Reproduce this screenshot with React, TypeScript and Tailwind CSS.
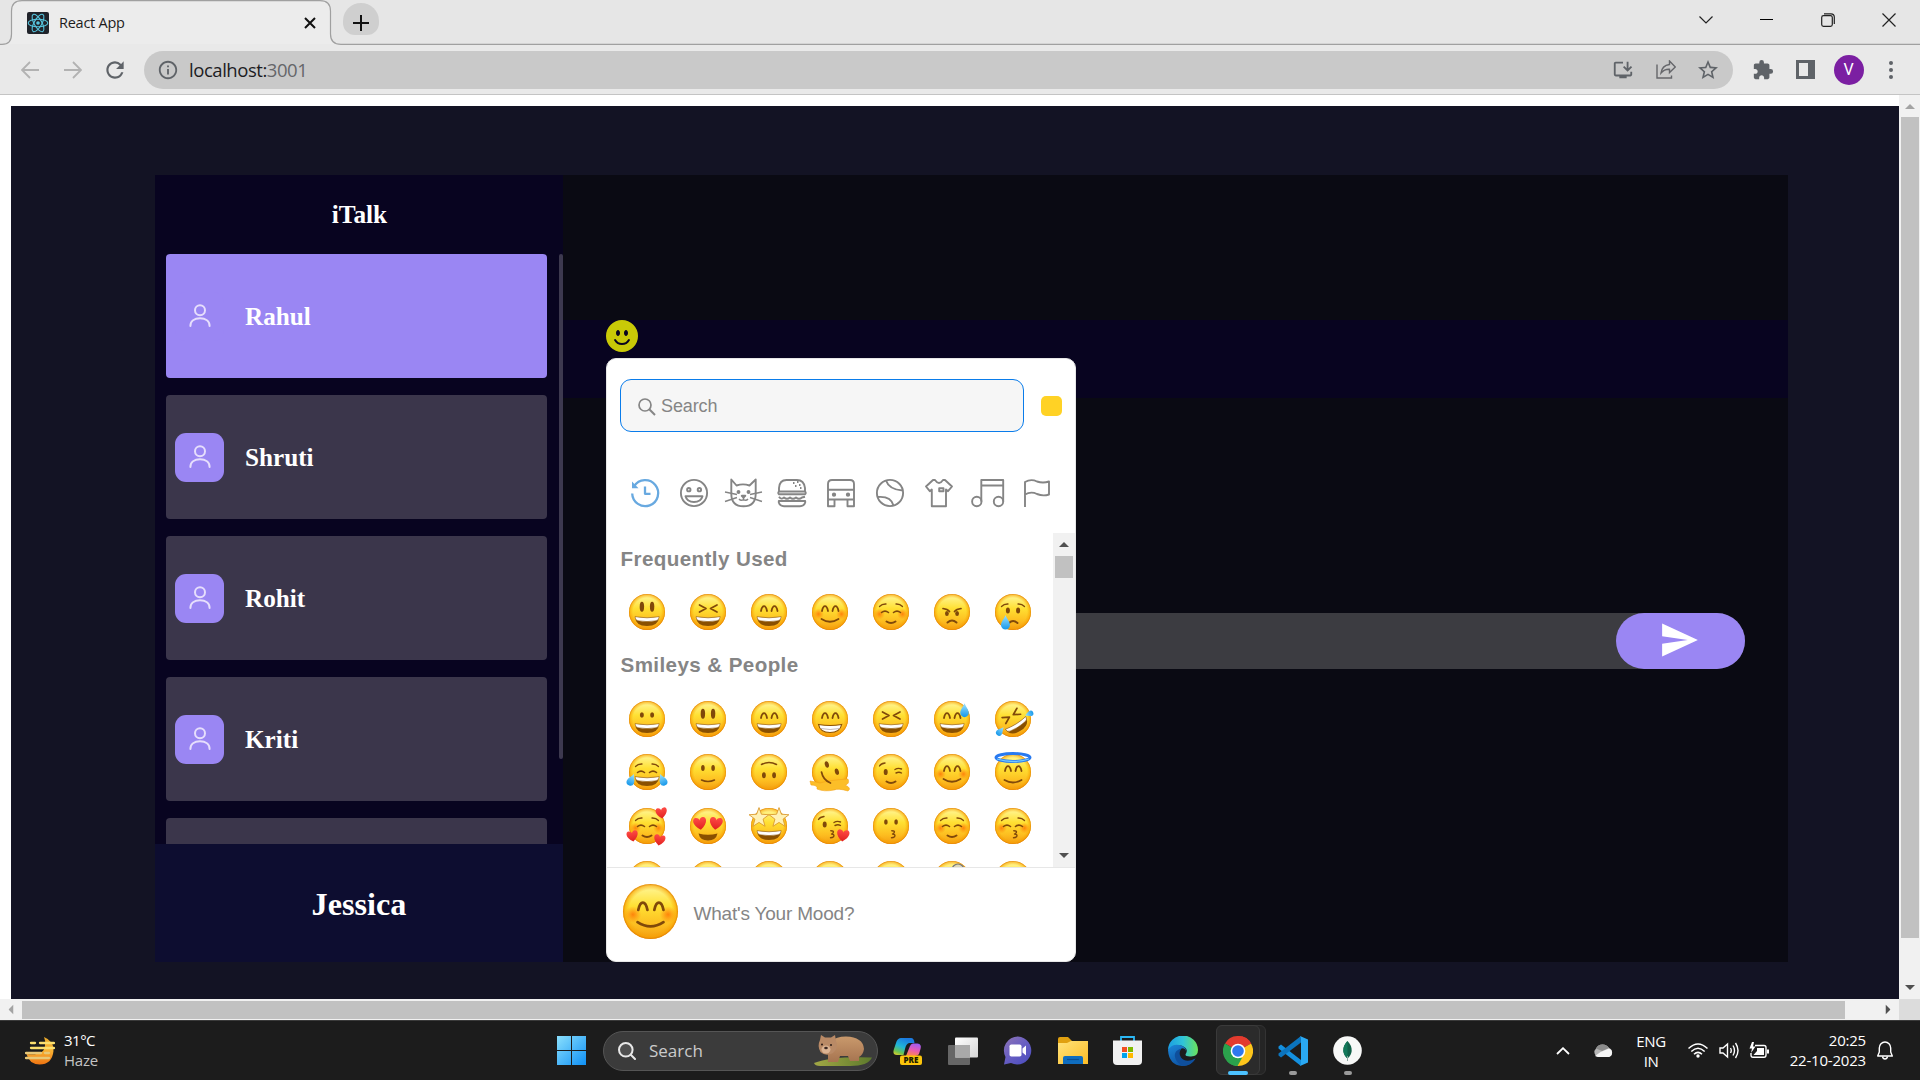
import React from "react";
import { MdExtension, MdStarBorder, MdRefresh, MdInstallDesktop, MdInfoOutline } from "react-icons/md";
import { BsEmojiSmileFill } from "react-icons/bs";
import { IoMdSend } from "react-icons/io";

const BROWN = "#80490a";

/* ---------- emoji ---------- */

const SharedDefs = () => (
  <svg className="absolute h-0 w-0" aria-hidden="true">
    <defs>
      <linearGradient id="face" x1="0" y1="0" x2="0" y2="1">
        <stop offset="0" stopColor="#fff8a0" />
        <stop offset="0.4" stopColor="#ffe033" />
        <stop offset="0.75" stopColor="#fdbd20" />
        <stop offset="1" stopColor="#f39c12" />
      </linearGradient>
      <radialGradient id="rim">
        <stop offset="0.78" stopColor="#f7a400" stopOpacity="0" />
        <stop offset="0.93" stopColor="#f79f00" stopOpacity="0.55" />
        <stop offset="1" stopColor="#e07b00" stopOpacity="0.95" />
      </radialGradient>
      <radialGradient id="blush">
        <stop offset="0" stopColor="#ff6a00" stopOpacity="0.75" />
        <stop offset="1" stopColor="#ff7a00" stopOpacity="0" />
      </radialGradient>
      <linearGradient id="tear" x1="0" y1="0" x2="0" y2="1">
        <stop offset="0" stopColor="#9ee3ff" />
        <stop offset="1" stopColor="#1597ea" />
      </linearGradient>
      <linearGradient id="heart" x1="0" y1="0" x2="0" y2="1">
        <stop offset="0" stopColor="#ff4b46" />
        <stop offset="1" stopColor="#e0201f" />
      </linearGradient>
    </defs>
  </svg>
);

const Stroke = ({ d, w = 1.7 }: { d: string; w?: number }) => (
  <path d={d} fill="none" stroke={BROWN} strokeWidth={w} strokeLinecap="round" strokeLinejoin="round" />
);
const Eyes = ({ rx = 1.8, ry = 2.7, y = 14 }: { rx?: number; ry?: number; y?: number }) => (
  <g fill={BROWN}>
    <ellipse cx="12.9" cy={y} rx={rx} ry={ry} />
    <ellipse cx="23.1" cy={y} rx={rx} ry={ry} />
  </g>
);
const Happy = () => <Stroke d="M10 17 Q11 12.2 13 12.2 Q15 12.2 16 17 M20.500 17 Q21.500 12.2 23.500 12.2 Q25.500 12.2 26.500 17" w={1.8} />;
const Calm = () => <Stroke d="M8.500 18.500 Q12 15.600 15.500 18.500 M20.500 18.500 Q24 15.600 27.500 18.500" w={1.6} />;
const Brows = () => <Stroke d="M6.500 12.500 Q9 9.800 13 10 M23 10 Q27 9.800 29.500 12.500" w={1.3} />;
const Squint = () => <Stroke d="M9.500 11 L16 14.500 L9.500 18 M27 11 L20.500 14.500 L27 18" w={1.7} />;
const Grin = () => (
  <g>
    <path d="M6 22.700 Q18 25 30.200 22.700 Q29.500 32 18 32 Q6.500 32 6 22.700Z" fill="#8a5000" />
    <path d="M6 22.700 Q18 25 30.200 22.700 Q30 26.200 27 26.700 Q18 28.500 9 26.700 Q6.200 26.200 6 22.700Z" fill="#fff" stroke="#8a5000" strokeWidth="0.5" />
  </g>
);
const Teeth = () => (
  <g>
    <path d="M6.500 23.500 Q18 25.500 29.700 23.500 Q28 31.500 18 31.500 Q8 31.500 6.500 23.500Z" fill="#fff" stroke="#8a5000" strokeWidth="1.100" />
    <path d="M8.500 27.500 Q18 29.500 28 27.500" stroke="#a99" strokeWidth="0.700" fill="none" />
  </g>
);
const Blush = () => (
  <g>
    <circle cx="6.500" cy="20" r="5.500" fill="url(#blush)" />
    <circle cx="29.500" cy="20" r="5.500" fill="url(#blush)" />
  </g>
);
const Heart = ({ x, y, s = 1, r = 0 }: { x: number; y: number; s?: number; r?: number }) => (
  <path
    d="M0 5.500 C-8 0 -6 -5.500 -3 -5.200 C-1 -5 0 -3.500 0 -2.700 C0 -3.500 1 -5 3 -5.200 C6 -5.500 8 0 0 5.500Z"
    fill="url(#heart)"
    transform={`translate(${x} ${y}) rotate(${r}) scale(${s})`}
  />
);
const Drop = ({ x, y, r = 0, s = 1 }: { x: number; y: number; r?: number; s?: number }) => (
  <path
    d="M0 -7 C1 -4 4.500 0 4.500 3 A4.500 4.500 0 0 1 -4.500 3 C-4.500 0 -1 -4 0 -7Z"
    fill="url(#tear)"
    transform={`translate(${x} ${y}) rotate(${r}) scale(${s})`}
  />
);
const Kiss = () => <Stroke d="M18.800 22.800 Q22.500 22.800 21 25 Q20.500 26 19.500 26 Q23 26.300 21.500 28.800 Q20.500 29.800 18.500 29.800" w={1.4} />;
const Star = ({ x }: { x: number }) => (
  <path
    d="M0 -9 L2.200 -3 L9 -2.500 L3.700 1.500 L5.500 8 L0 4.500 L-5.500 8 L-3.700 1.500 L-9 -2.500 L-2.200 -3Z"
    fill="#fff1b5"
    stroke="#d9992c"
    strokeWidth="0.800"
    transform={`translate(${x} 9.500) scale(1.100)`}
  />
);

const features: Record<string, React.ReactNode> = {
  smiley: <><Eyes rx={2.2} ry={5} y={12.7} /><Grin /></>,
  laughing: <><Squint /><Grin /></>,
  smile: <><Happy /><Grin /></>,
  blush: <><Blush /><Happy /><Stroke d="M9.500 25 Q18 30.500 26.500 25" w={1.800} /></>,
  relaxed: <><Blush /><Brows /><Calm /><Stroke d="M13.500 27.500 Q18 30.500 22.500 27.500" w={2} /></>,
  angry: <><Stroke d="M9 14.500 Q13.500 15 15.500 17.500 M27 14.500 Q22.500 15 20.500 17.500" w={1.700} /><Eyes rx={1.9} ry={2.6} y={19.5} /><Stroke d="M13.500 28.500 Q18 24.500 22.500 28.500" w={2} /></>,
  cry: <><Brows /><Eyes rx={2} ry={3} y={16.5} /><Stroke d="M14 29 Q18 25 22.500 29" w={1.900} /><Drop x={10.500} y={28} /></>,
  grinning: <><Eyes rx={2} ry={2.700} /><Grin /></>,
  beaming: <><Happy /><Teeth /></>,
  sweat: <><Happy /><Grin /><Drop x={30.500} y={9} s={0.950} /></>,
  rofl: <><g transform="rotate(-32 18 18)"><Squint /><Grin /></g><Drop x={34} y={13} r={-110} s={0.600} /><Drop x={5.500} y={30} r={40} s={0.700} /></>,
  joy: <><Brows /><Calm /><Grin /><Drop x={2.500} y={25.500} r={25} s={0.850} /><Drop x={33.500} y={25.500} r={-25} s={0.850} /></>,
  slight: <><Eyes rx={1.8} ry={3} /><Stroke d="M11.500 26 Q18 29 24.500 26" w={1.500} /></>,
  upside: <g transform="rotate(180 18 18)"><Eyes rx={1.9} ry={3} y={14.800} /><Stroke d="M10.500 25.500 Q18 29.500 25.500 25.500" w={1.500} /></g>,
  melt: <><ellipse cx="14.700" cy="10.500" rx="2" ry="3.300" fill={BROWN} transform="rotate(-15 15 10)" /><ellipse cx="24.700" cy="17.600" rx="2" ry="3.300" fill={BROWN} transform="rotate(-15 25 17)" /><path d="M-2 27 Q4 28 8 29 Q18 26 36 25 Q38 30 33 31 Q40 34 36 37 Q26 34 22 36 Q12 38 5 35 Q6 31 -1 31Z" fill="#fcbe28" stroke="#f4a41a" strokeWidth="0.600" /><Stroke d="M9.500 18 Q11 26 18.500 29" /></>,
  wink: <><Stroke d="M6.500 12 Q8 9.500 12 9 M22 15.500 Q25 13.500 28.500 15 M23 19 Q26 17.500 28.500 19" w={1.400} /><ellipse cx="12.700" cy="18" rx="2" ry="3.100" fill={BROWN} /><Stroke d="M13.500 27.500 Q18 30.500 22.500 27.500" w={2} /></>,
  halo: <><Happy /><Stroke d="M9.500 26 Q18 31 26.500 26" w={1.800} /><ellipse cx="18" cy="3.500" rx="17" ry="4" fill="none" stroke="#287af0" strokeWidth="3" /><path d="M2 5 Q18 10 34 5" fill="none" stroke="#72c8ff" strokeWidth="1.300" /></>,
  hearts: <><Blush /><Brows /><Calm /><Stroke d="M13.500 27.500 Q18 30.500 22.500 27.500" w={2} /><Heart x={32.500} y={5} r={-8} /><Heart x={3.500} y={28} r={-10} /><Heart x={30.500} y={32} r={10} /></>,
  hearteyes: <><Heart x={10} y={15.500} s={1.150} r={-8} /><Heart x={26} y={15.500} s={1.150} r={8} /><path d="M8.500 25.500 Q18 28 27.500 25.500 Q26 32.500 18 32.500 Q10 32.500 8.500 25.500Z" fill="#8a5000" /></>,
  star: <><Star x={8} /><Star x={28} /><Grin /></>,
  kissheart: <><Stroke d="M6.500 11.500 Q8 9 12 8.500 M22 14.500 Q25 12.500 28.500 14 M23 17.500 Q26 16 28.500 17.500" w={1.400} /><ellipse cx="12.700" cy="16.500" rx="2" ry="3" fill={BROWN} /><Kiss /><Heart x={31} y={27.500} s={1.100} r={8} /></>,
  kissing: <><Eyes rx={1.8} ry={2.7} /><Kiss /></>,
  kissclosed: <><Blush /><Brows /><Calm /><Kiss /></>,
  plain: null,
  monocle: <circle cx="24" cy="9" r="6" fill="#ddd8b8" stroke="#777" strokeWidth="1.200" />,
};

const Emoji = ({ kind, big }: { kind: string; big?: boolean }) => (
  <svg viewBox="0 0 36 36" className={big ? "size-[55px] overflow-visible" : "size-9 overflow-visible"}>
    <circle cx="18" cy="18" r="18" fill="url(#face)" />
    <circle cx="18" cy="18" r="18" fill="url(#rim)" />
    {features[kind]}
  </svg>
);

const frequent = ["smiley", "laughing", "smile", "blush", "relaxed", "angry", "cry"];
const people = [
  "grinning", "smiley", "smile", "beaming", "laughing", "sweat", "rofl",
  "joy", "slight", "upside", "melt", "wink", "blush", "halo",
  "hearts", "hearteyes", "star", "kissheart", "kissing", "relaxed", "kissclosed",
  "plain", "plain", "plain", "plain", "plain", "monocle", "plain",
];

const EmojiGrid = ({ items }: { items: string[] }) => (
  <div className="grid auto-rows-[53.5px] grid-cols-[repeat(7,61px)]">
    {items.map((k, i) => (
      <div key={i} className="flex items-center justify-center"><Emoji kind={k} /></div>
    ))}
  </div>
);

/* ---------- picker category icons ---------- */

const categories: React.ReactNode[] = [
  <g stroke="#68a9e0" strokeWidth="2.300">
    <path d="M3.200 7.200 A13 13 0 1 1 1.200 14.500" />
    <path d="M1 2.500 V9.300 H7.500 Z" fill="#68a9e0" stroke="none" />
    <path d="M14 7.500 V14.800 H19.500" />
  </g>,
  <g>
    <circle cx="14" cy="14" r="13.100" />
    <circle cx="8.800" cy="10.700" r="1.700" /><circle cx="19.400" cy="10.700" r="1.700" />
    <path d="M5.500 17.200 H22.500 Q21 23 14 23 Q7 23 5.500 17.200Z" />
  </g>,
  <g>
    <path d="M2.300 15 V0.500 L7.500 6.500 Q14 4.200 20.500 6.500 L26.700 0.500 V15 Q26.500 27.300 14.500 27.300 Q2.500 27.300 2.300 15Z" />
    <path d="M-4 13 L8 15.500 M-4 22.500 L8 18.500 M33 13 L21 15.500 M33 22.500 L21 18.500 M14.500 18 V20.500 M10 20 Q12 22.300 14.500 20.500 Q17 22.300 19 20" strokeWidth="1.500" />
    <circle cx="9.500" cy="13" r="1" fill="#858585" /><circle cx="19.500" cy="13" r="1" fill="#858585" /><path d="M12.700 16.800 H16.300 L14.500 18.500Z" fill="#858585" />
  </g>,
  <g>
    <path d="M1 12.500 V9 Q1.500 1 8.500 1 H19 Q26 1 27 9 V12.500 M1 12.500 H27 Q28.500 14 27 15.300 H1 Q-0.500 14 1 12.500Z" />
    <path d="M1 17.800 Q3 21 6 18.500 Q9 21 12 18.500 Q15 21 18 18.500 Q21 21 24 18.500 L27 17.800 M0.800 22 H27.200 V23.500 Q26 27.200 22 27.200 H6 Q2 27.200 0.800 23.500Z" />
    <path d="M15 4 h1.500 M19 3 h1.500 M17 7 h1.500 M21 6 h1.500 M22 9 h1.500" />
  </g>,
  <g>
    <path d="M1 20.500 V5 Q1 1 5 1 H23 Q27 1 27 5 V20.500Z M1 10.800 H27 M1 20.500 V27.200 H7.500 V20.500 M20.500 20.500 V27.200 H27 V20.500" />
    <circle cx="7" cy="15.700" r="1.200" fill="#858585" /><circle cx="21" cy="15.700" r="1.200" fill="#858585" />
  </g>,
  <g>
    <circle cx="14" cy="14" r="13.100" />
    <path d="M10 1.500 Q13 10.500 26.500 11.500 M2 18 Q15 17 17.500 26.500" />
  </g>,
  <g>
    <path d="M8 1 L1 7.500 L4.800 12.200 L6.800 10.500 V27.200 H21 V10.500 L23 12.200 L27 7.500 L20 1 H18 Q14 7 10 1Z" />
    <path d="M14.200 9.200 h4.300 v3 h-4.300z" />
  </g>,
  <g>
    <circle cx="2.800" cy="22.500" r="4.700" /><circle cx="24.500" cy="22.500" r="4.700" />
    <path d="M7.300 22.500 V1 H29.200 V22.500 M7.300 6.500 H29.200" />
  </g>,
  <g>
    <path d="M2 28 V3 Q8 -0.500 14 2.500 Q20 4.500 26 2.500 V15.500 Q20 17.500 14 15 Q8 12 2 15.500" />
  </g>,
];

const PickerArrow = ({ down, color = "#505050" }: { down?: boolean; color?: string }) => (
  <svg viewBox="0 0 10 5" className={down ? "h-[5px] w-[10px] rotate-180" : "h-[5px] w-[10px]"}>
    <path d="M5 0 L10 5 H0Z" fill={color} />
  </svg>
);

const Picker = () => (
  <div className="flex h-[604px] w-[470px] flex-col overflow-hidden rounded-[10px] border border-[#e7e7e7] bg-white font-['Liberation_Sans',sans-serif] text-[#858585]">
    <div className="flex h-[93px] shrink-0 items-center pl-[13px]">
      <div className="flex h-[53px] w-[404px] items-center rounded-[11px] border border-[#0a7cea] bg-[#f6f6f6] pl-[17px]">
        <svg viewBox="0 0 18 18" className="mt-0.5 size-[18px]" fill="none" stroke="#858585" strokeWidth="1.700">
          <circle cx="7" cy="7" r="6" /><path d="M11.300 11.300 L17 17" strokeWidth="2" />
        </svg>
        <span className="ml-[5px] text-[18px] leading-none tracking-[-0.1px]">Search</span>
      </div>
      <div className="ml-[17px] h-5 w-[21px] rounded-[5px] bg-[#ffd225]" />
    </div>
    <div className="mt-[17px] grid h-[48px] shrink-0 grid-cols-[repeat(9,49.100px)] pl-[13px]">
      {categories.map((c, i) => (
        <div key={i} className="flex items-center justify-center">
          <svg viewBox="0 0 28 28" className="size-7 overflow-visible" fill="none" stroke="#858585" strokeWidth="1.900" strokeLinejoin="round">{c}</svg>
        </div>
      ))}
    </div>
    <div className="mt-[16px] flex h-[334px] shrink-0 justify-between overflow-hidden">
      <div className="pl-[9.500px]">
        <div className="flex h-[52px] items-center pl-1 text-[20.600px] font-bold tracking-[0.4px]">Frequently Used</div>
        <EmojiGrid items={frequent} />
        <div className="flex h-[53.500px] items-center pl-1 text-[20.600px] font-bold tracking-[0.4px]">Smileys &amp; People</div>
        <EmojiGrid items={people} />
      </div>
      <div className="flex h-[334px] w-[22px] flex-col items-center bg-[#f1f1f1]">
        <div className="flex h-[23px] items-center"><PickerArrow /></div>
        <div className="h-[22px] w-[18px] bg-[#c1c1c1]" />
        <div className="mt-auto flex h-[23px] items-center"><PickerArrow down /></div>
      </div>
    </div>
    <div className="flex flex-1 items-center border-t border-[#e7e7e7] pb-[7px] pl-[15.500px]">
      <Emoji kind="blush" big />
      <span className="ml-[16px] mt-[6px] text-[19px] tracking-[-0.2px]">What's Your Mood?</span>
    </div>
  </div>
);

/* ---------- chat page ---------- */

const Avatar = () => (
  <div className="flex size-[49px] items-center justify-center rounded-[11px] bg-[#9a86f3] pb-[2px]">
    <svg viewBox="0 0 22 23" className="h-[23px] w-[22px]" fill="none" stroke="#e6defc" strokeWidth="2" strokeLinecap="round">
      <circle cx="11" cy="6.300" r="5" />
      <path d="M1.400 22 C1.400 17 5.500 14.300 11 14.300 C16.500 14.300 20.600 17 20.600 22" />
    </svg>
  </div>
);

const contacts = ["Rahul", "Shruti", "Rohit", "Kriti", ""];

const ChatPage = () => (
  <div className="mt-[11px] ml-[11px] h-[893px] w-[1888px] bg-[#131324] pt-[69px] pl-[144px]">
    <div className="flex h-[787px] w-[1633px] bg-[#0a0a13]">
      <aside className="flex w-[408px] flex-col bg-[#080420] font-['Liberation_Serif',serif] font-bold text-white">
        <div className="flex h-[79px] shrink-0 items-center justify-center pl-px text-[25.300px]">iTalk</div>
        <div className="flex h-[590px] shrink-0 overflow-hidden pl-[11px]">
          <div className="flex w-[381px] flex-col gap-[17.100px]">
            {contacts.map((name, i) => (
              <div
                key={i}
                className={
                  i === 0
                    ? "flex h-[124px] shrink-0 items-center rounded-[4px] bg-[#9a86f3] pl-[9px]"
                    : "flex h-[124px] shrink-0 items-center rounded-[4px] bg-[#3b364b] pl-[9px]"
                }
              >
                {name && <><Avatar /><span className="ml-[21px] pt-px text-[25.200px]">{name}</span></>}
              </div>
            ))}
          </div>
          <div className="ml-auto h-[505px] w-1 rounded-sm bg-[#3d394f]" />
        </div>
        <div className="flex flex-1 items-center justify-center bg-[#0d0d30] pt-[3px] text-[32.200px]">Jessica</div>
      </aside>
      <main className="flex-1 pt-[145px]">
        <div className="h-[78px] bg-[#080420] pl-[43px]">
          <div className="relative w-8">
            <BsEmojiSmileFill className="size-8 text-[#c9c907]" />
            <div className="absolute top-[38px] left-0 z-10"><Picker /></div>
          </div>
        </div>
        <div className="mt-[215px] ml-[93px] flex h-14 w-[1089px] justify-end rounded-[28px] bg-[#3c3c41]">
          <button className="flex h-14 w-[129px] items-center justify-center rounded-[28px] bg-[#9a86f3] pr-0.5 pb-0.5 text-white">
            <IoMdSend className="size-[44px]" />
          </button>
        </div>
      </main>
    </div>
  </div>
);

/* ---------- browser chrome ---------- */

const ReactLogo = () => (
  <svg viewBox="0 0 22 22" className="size-[22px]" fill="none" stroke="#56c5de" strokeWidth="1.100">
    <rect width="22" height="22" rx="2" fill="#20232a" stroke="none" />
    <ellipse cx="11" cy="11" rx="9.800" ry="3.800" />
    <ellipse cx="11" cy="11" rx="9.800" ry="3.800" transform="rotate(60 11 11)" />
    <ellipse cx="11" cy="11" rx="9.800" ry="3.800" transform="rotate(120 11 11)" />
    <circle cx="11" cy="11" r="1.800" fill="#56c5de" stroke="none" />
  </svg>
);

const Cell = ({ w, children }: { w: string; children: React.ReactNode }) => (
  <div className={"flex h-full shrink-0 items-center justify-center " + w}>{children}</div>
);

const TabStrip = () => (
  <div className="relative flex h-[45px] bg-[#e6e6e6] font-['Open_Sans',sans-serif]">
    <svg className="absolute top-0 left-0 h-[45px] w-[1920px]" viewBox="0 0 1920 45" fill="#ececec" stroke="#a0a0a0" strokeWidth="1.200">
      <path d="M-2 44.400 H2 Q11.500 44.400 11.500 34 V11 Q11.500 0.600 22 0.600 H320 Q330.500 0.600 330.500 11 V34 Q330.500 44.400 341 44.400 H1922" />
    </svg>
    <div className="relative flex h-[45px] w-[331px] items-center pl-[27px]">
      <ReactLogo />
      <span className="ml-[10px] text-[14.500px] tracking-[-0.25px] text-[#1c1c1c]">React App</span>
      <svg viewBox="0 0 12 12" className="mr-[15px] ml-auto size-[12px]" stroke="#111" strokeWidth="2"><path d="M1 1 L11 11 M11 1 L1 11" /></svg>
    </div>
    <div className="relative ml-[12px] mt-[3px] flex h-8 w-9 items-center justify-center rounded-t-[18px] rounded-b-[12px] bg-[#cfcfcf]">
      <svg viewBox="0 0 16 16" className="mt-[7px] size-4" stroke="#111" strokeWidth="2"><path d="M8 0 V16 M0 8 H16" /></svg>
    </div>
    <div className="relative ml-auto flex h-[39px]">
      <Cell w="w-[52px]"><svg viewBox="0 0 14 8" className="h-2 w-[14px]" fill="none" stroke="#222" strokeWidth="1.200"><path d="M0.500 0.500 L7 7 L13.500 0.500" /></svg></Cell>
      <Cell w="w-[68px]"><div className="h-px w-[13px] bg-black" /></Cell>
      <Cell w="w-[56px]">
        <svg viewBox="0 0 14 14" className="size-[14px]" fill="none" stroke="#222" strokeWidth="1.200">
          <rect x="0.700" y="2.700" width="10.600" height="10.600" rx="1.800" /><path d="M3 0.800 H10 Q13.300 0.800 13.300 4 V11" />
        </svg>
      </Cell>
      <Cell w="w-[66px]"><svg viewBox="0 0 14 14" className="size-[14px]" stroke="#222" strokeWidth="1.200"><path d="M0.500 0.500 L13.500 13.500 M13.500 0.500 L0.500 13.500" /></svg></Cell>
      <div className="-mr-0.5" />
    </div>
  </div>
);

const Toolbar = () => (
  <div className="flex h-[50px] items-center border-b border-[#c4c4c4] bg-[#e9e9e9] pl-[8px] text-[#5f6368]">
    <Cell w="w-[43px]"><svg viewBox="0 0 18 18" className="size-[18px]" fill="none" stroke="#b2b2b2" strokeWidth="1.800"><path d="M18 9 H1.500 M9 1 L1 9 L9 17" /></svg></Cell>
    <Cell w="w-[43px]"><svg viewBox="0 0 18 18" className="size-[18px]" fill="none" stroke="#b2b2b2" strokeWidth="1.800"><path d="M0 9 H16.500 M9 1 L17 9 L9 17" /></svg></Cell>
    <Cell w="w-[42px]"><MdRefresh className="size-[26px]" /></Cell>
    <div className="ml-[8px] flex h-[38px] w-[1589px] items-center rounded-[19px] bg-[#c9c9c9] pl-[13px] font-['Open_Sans',sans-serif]">
      <MdInfoOutline className="size-[22px]" />
      <span className="ml-[10px] text-[18.500px] tracking-[-0.450px] text-[#1c1c1f]">localhost:<span className="text-[#65666a]">3001</span></span>
      <div className="ml-auto flex h-full">
        <Cell w="w-[43px]"><MdInstallDesktop className="size-[22px]" /></Cell>
        <Cell w="w-[43px]">
          <svg viewBox="0 0 20 19" className="h-[19px] w-5" fill="none" stroke="#65666a" strokeWidth="1.400">
            <path d="M1 4.500 V18 H15.500 V15.500" /><path d="M13.500 1 L19.300 7 L13.500 12.500 V9.300 Q8.500 9 5 13 Q6 5.500 13.500 4.500Z" />
          </svg>
        </Cell>
        <Cell w="w-[42px]"><MdStarBorder className="size-[24px]" /></Cell>
        <div className="w-1" />
      </div>
    </div>
    <Cell w="w-[59px]"><MdExtension className="size-[22px]" /></Cell>
    <Cell w="w-[26px]"><svg viewBox="0 0 19 19" className="size-[19px]"><path fillRule="evenodd" fill="#5f6368" d="M0 0 H19 V19 H0Z M3 3 V16 H12 V3Z" /></svg></Cell>
    <Cell w="w-[61px]"><div className="flex size-[30px] items-center justify-center rounded-full bg-[#7b1fa2] font-['Roboto',sans-serif] text-[16px] text-white">V</div></Cell>
    <Cell w="w-[23px]"><svg viewBox="0 0 4 18" className="h-[18px] w-1" fill="#5f6368"><circle cx="2" cy="2" r="2" /><circle cx="2" cy="9" r="2" /><circle cx="2" cy="16" r="2" /></svg></Cell>
  </div>
);

/* ---------- taskbar ---------- */

const Wombat = () => (
  <svg viewBox="0 0 58 32" className="h-8 w-[58px]">
    <defs>
      <linearGradient id="fur" x1="0" y1="0" x2="0" y2="1"><stop offset="0" stopColor="#c9996c" /><stop offset="1" stopColor="#a67450" /></linearGradient>
      <linearGradient id="grass" x1="0" y1="0" x2="1" y2="0"><stop offset="0" stopColor="#a3a845" /><stop offset="1" stopColor="#5d7a2c" /></linearGradient>
    </defs>
    <path d="M0 28 Q18 21 58 22.500 Q54 31 36 31 H6 Q1 31 0 28Z" fill="url(#grass)" />
    <path d="M14 18 Q12 2 32 1.500 Q49 2 50 14 Q49 20 45 22 V26 H36 L34 21 H26 L24 27 H14Z" fill="url(#fur)" />
    <path d="M6 5 L7 0 L11 2.500 H17 L21 0 L22 6 Q25 13 19 18 Q12 22 6.500 17 Q3 11 6 5Z" fill="#b98a66" />
    <ellipse cx="12" cy="14.500" rx="4.500" ry="4" fill="#dcb493" />
    <ellipse cx="12" cy="13" rx="1.800" ry="1.300" fill="#3a2620" /><circle cx="8" cy="9.500" r="1" fill="#2b1c18" /><circle cx="17" cy="10" r="1" fill="#2b1c18" />
  </svg>
);

const TaskIcons: React.ReactNode[] = [
  <svg viewBox="0 0 29 29" className="size-[29px]">
    <defs>
      <linearGradient id="cpa" x1="0.500" y1="0" x2="0" y2="1"><stop offset="0" stopColor="#1c7be0" /><stop offset="0.450" stopColor="#1fb5d8" /><stop offset="0.750" stopColor="#6bc253" /><stop offset="1" stopColor="#f2d022" /></linearGradient>
      <linearGradient id="cpb" x1="0.600" y1="0" x2="0.300" y2="1"><stop offset="0" stopColor="#a05cf2" /><stop offset="0.500" stopColor="#e85ab4" /><stop offset="1" stopColor="#ff8a4a" /></linearGradient>
    </defs>
    <path d="M8 2 H18 Q21 2 21.500 7 H16 Q13 8 12 13 L10.500 19 H4 Q-1 19 1 13 L3.500 5.500 Q5 2 8 2Z" fill="url(#cpa)" />
    <path d="M20 7.500 H24.500 Q29 8 27.500 13 L26 18 Q25 20 22 20 H13 L17 10 Q18 7.500 20 7.500Z" fill="url(#cpb)" />
    <rect x="7" y="19.500" width="22" height="9.500" rx="2" fill="#fcc50b" />
    <text x="18" y="27.300" textAnchor="middle" fontFamily="Open Sans" fontWeight="800" fontSize="8" fill="#221c00">PRE</text>
  </svg>,
  <svg viewBox="0 0 30 28" className="h-7 w-[30px]">
    <defs><linearGradient id="tv" x1="0" y1="0" x2="1" y2="1"><stop offset="0" stopColor="#fff" /><stop offset="1" stopColor="#d5d5d5" /></linearGradient></defs>
    <rect y="8" width="22" height="20" rx="1" fill="#666" /><rect x="7" y="0.500" width="23" height="20" rx="1" fill="url(#tv)" /><path d="M7 8 H22 V20.500 H7Z" fill="#a9a9a9" />
  </svg>,
  <svg viewBox="0 0 29 29" className="size-[29px]">
    <defs><linearGradient id="ch" x1="0" y1="0" x2="0.800" y2="1"><stop offset="0" stopColor="#8f76b5" /><stop offset="0.500" stopColor="#6a5fc2" /><stop offset="1" stopColor="#4d4fc0" /></linearGradient></defs>
    <path d="M15 0.500 A14 14 0 1 1 8 27 L1 28.500 L2.500 21 A14 14 0 0 1 15 0.500Z" fill="url(#ch)" />
    <rect x="6.500" y="8.500" width="12" height="12" rx="1.800" fill="#fff" /><path d="M19.500 12.500 L23 9.500 V19.500 L19.500 16.500Z" fill="#fff" />
  </svg>,
  <svg viewBox="0 0 30 27" className="h-[27px] w-[30px]">
    <defs><linearGradient id="fo" x1="0" y1="0" x2="1" y2="1"><stop offset="0" stopColor="#ffe27a" /><stop offset="1" stopColor="#fdbd26" /></linearGradient></defs>
    <path d="M0 2 Q0 0 2 0 H10 L14 4 V10 H0Z" fill="#e0a010" /><path d="M0 6 H9 L13 4 H30 V27 H0Z" fill="url(#fo)" /><path d="M5 27 V21 Q5 19 7 19 H23 Q25 19 25 21 V27Z" fill="#0f6dbf" /><path d="M9 22.500 H21" stroke="#0a4f94" strokeWidth="1.200" />
  </svg>,
  <svg viewBox="0 0 29 29" className="size-[29px]">
    <path d="M8 6 V1 H21 V6" fill="none" stroke="#2bb8f5" strokeWidth="1.800" /><path d="M0 4.500 H29 V25 Q29 29 25 29 H4 Q0 29 0 25Z" fill="#f1f1f1" />
    <path d="M9 11 h5 v5 h-5z" fill="#f25022" /><path d="M15 11 h5 v5 h-5z" fill="#7fba00" /><path d="M9 17 h5 v5 h-5z" fill="#00a4ef" /><path d="M15 17 h5 v5 h-5z" fill="#ffb900" />
  </svg>,
  <svg viewBox="0 0 30 30" className="size-[30px]">
    <defs>
      <linearGradient id="ea" x1="0" y1="0.300" x2="1" y2="0.300"><stop offset="0" stopColor="#1b9ee2" /><stop offset="0.500" stopColor="#30c3d8" /><stop offset="1" stopColor="#6be35a" /></linearGradient>
      <linearGradient id="eb" x1="0" y1="0" x2="0.600" y2="1"><stop offset="0" stopColor="#1c86d8" /><stop offset="1" stopColor="#0c50a0" /></linearGradient>
    </defs>
    <path d="M0 14 A15 14.500 0 0 1 30 14 Q30 21 22 20.500 Q16 20 18 17.500 Q20 14 17 11.500 Q10 6 0 14Z" fill="url(#ea)" />
    <path d="M0 14 Q4 7.500 11.500 9 Q18 10.500 18 15 Q17 11.500 13.500 12.500 Q8 16 12 22 Q18 29 27.500 22.500 Q23 30 14 30 Q1 29 0 14Z" fill="url(#eb)" />
    <path d="M13.500 12.500 Q4 15 8 24 Q11 29 16 30 Q24 29 27.500 22.500 Q18 27.500 13 21.500 Q10 17 13.500 12.500Z" fill="#0f4f9c" />
  </svg>,
  <svg viewBox="0 0 30 30" className="size-[30px]">
    <path d="M15 15 L2 7.500 A15 15 0 0 1 28 7.500Z" fill="#e33b2e" /><path d="M15 15 L28 7.500 A15 15 0 0 1 15 30Z" fill="#fdc51b" /><path d="M15 15 L15 30 A15 15 0 0 1 2 7.500Z" fill="#2ba24c" />
    <path d="M15 8 H28.200 Q25 0 15 0Z" fill="#e33b2e" /><path d="M21.500 18 L15 30 Q10 29 9 26Z" fill="#fdc51b" /><path d="M8.500 19 L2 7.500 Q-2 18 5 26 Q9 30 14.500 30 L19 22Z" fill="#2ba24c" />
    <circle cx="15" cy="15" r="7.300" fill="#fff" /><circle cx="15" cy="15" r="5.800" fill="#2f78ee" />
  </svg>,
  <svg viewBox="0 0 30 30" className="size-[30px]">
    <path d="M0.500 10.500 L3 8.500 L23 24 V30 L0.500 12.500Z" fill="#1490df" /><path d="M0.500 19.500 L3 21.500 L23 6.500 V0 L0.500 17.500Z" fill="#0b74be" /><path d="M22 0 L30 3.500 V26.500 L22 30 Q23 29.500 23 27 V3 Q23 0.500 22 0Z" fill="#2aa9f3" />
  </svg>,
  <svg viewBox="0 0 29 29" className="size-[29px]">
    <circle cx="14.500" cy="14.500" r="14.300" fill="#f7f8f7" /><path d="M14.500 5 Q19 9.500 18.700 15 Q18 20 14.500 22.500 Q11 20 10.300 15 Q10 9.500 14.500 5Z" fill="#116149" /><path d="M14.500 5 Q10 9.500 10.300 15 Q11 20 14.500 22.500Z" fill="#13795a" /><path d="M14.500 20 V25" stroke="#8aa79c" strokeWidth="1" />
  </svg>,
];

const Taskbar = () => (
  <div className="flex h-[60px] items-center border-t border-[#3a3a3a] bg-[#1c1c1c] font-['Open_Sans',sans-serif] text-white">
    <div className="flex w-[543px] items-center pl-[25px]">
      <svg viewBox="0 0 30 28" className="h-7 w-[30px]">
        <defs><linearGradient id="hz" x1="0" y1="0" x2="0" y2="1"><stop offset="0" stopColor="#e8a92c" /><stop offset="0.500" stopColor="#f8b133" /><stop offset="1" stopColor="#ee7412" /></linearGradient></defs>
        <path d="M19 0 Q29 4 28.500 14 Q27 27.500 14.500 27.500 Q4 27 1.500 17 Q20 19 20 8 Q20.500 3 19 0Z" fill="url(#hz)" />
        <path d="M6 6 H10 M15 6 H29 M6 11 H29" stroke="#fbdf6e" strokeWidth="2.300" strokeLinecap="round" /><path d="M1 16 H16 M20 16 H24 M1 21 H24" stroke="#e8c877" strokeWidth="2.300" strokeLinecap="round" />
      </svg>
      <div className="ml-[9px] -mt-0.5 text-[15px] leading-[20px] tracking-[-0.500px]">
        <div>31°C</div><div className="tracking-[-0.200px] text-[#c4c4c4]">Haze</div>
      </div>
    </div>
    <Cell w="w-[57px]">
      <svg viewBox="0 0 29 29" className="size-[29px]">
        <defs><linearGradient id="wn" x1="0" y1="0" x2="1" y2="1"><stop offset="0" stopColor="#8be0fd" /><stop offset="1" stopColor="#0f90f5" /></linearGradient></defs>
        <path d="M0 0 H14 V14 H0Z M15 0 H29 V14 H15Z M0 15 H14 V29 H0Z M15 15 H29 V29 H15Z" fill="url(#wn)" />
      </svg>
    </Cell>
    <div className="ml-[3px] flex h-10 w-[275px] items-center rounded-full border border-[#555] bg-[#3b3b3b] pl-[14px]">
      <svg viewBox="0 0 18 18" className="size-[18px]" fill="none" stroke="#e8e8e8" strokeWidth="2" strokeLinecap="round"><circle cx="7.800" cy="7.800" r="6.800" fill="#505050" /><path d="M12.800 12.800 L17 17" /></svg>
      <span className="ml-[13px] text-[17px] text-[#cbcbcb]">Search</span>
      <div className="mr-[5px] ml-auto"><Wombat /></div>
    </div>
    <div className="ml-[2px] flex h-[59px]">
      {TaskIcons.map((icon, i) => (
        <div key={i} className="relative flex w-[55px] items-center justify-center">
          {i === 6 && <div className="absolute top-1 left-[7px] h-[50px] w-[49px] rounded-md border border-[#333] bg-[#252525]" />}
          {i === 6 && <div className="absolute top-1 left-[6px] h-[50px] w-[44px] rounded-md border border-[#3a3a3a] bg-[#2b2b2b]" />}
          <div className="relative">{icon}</div>
          {i === 6 && <div className="absolute bottom-[5px] left-[18px] h-1 w-5 rounded-full bg-[#4cc2ff]" />}
          {i > 6 && <div className="absolute bottom-[5px] left-[24px] h-1 w-2 rounded-full bg-[#9a9a9a]" />}
        </div>
      ))}
    </div>
    <div className="ml-auto flex h-full items-center pr-[16px]">
      <Cell w="w-[40px]"><svg viewBox="0 0 14 8" className="h-2 w-[14px]" fill="none" stroke="#fff" strokeWidth="1.800"><path d="M1 7 L7 1.200 L13 7" /></svg></Cell>
      <Cell w="w-[40px]">
        <svg viewBox="0 0 20 13" className="h-[13px] w-5"><path d="M5 13 A5 5 0 0 1 3 4.500 A7.500 7.500 0 0 1 16 4 A4.800 4.800 0 0 1 16 13Z" fill="#b5b5b5" /><path d="M3 4.500 A7.500 7.500 0 0 1 16 4 L9 7Z" fill="#8c8c8c" /><path d="M2 12 Q8 7 16 4.500 A4.500 4.500 0 0 1 16 13 H5Z" fill="#f5f5f5" /></svg>
      </Cell>
      <div className="w-[56px] text-center text-[15px] leading-[20px] tracking-[-0.400px]"><div>ENG</div><div>IN</div></div>
      <Cell w="w-[38px]">
        <svg viewBox="0 0 20 15" className="h-[15px] w-5" fill="none" stroke="#fff" strokeWidth="1.500"><path d="M0.500 5.500 Q10 -3.500 19.500 5.500 M3.300 8.500 Q10 2 16.700 8.500 M6 11.300 Q10 7.500 14 11.300" /><circle cx="10" cy="13" r="1.700" fill="#fff" stroke="none" /></svg>
      </Cell>
      <Cell w="w-[24px]">
        <svg viewBox="0 0 20 17" className="h-[17px] w-5" fill="none" stroke="#fff" strokeWidth="1.400"><path d="M1 6 H4 L8.500 2 V15 L4 11 H1Z M11.500 6 Q13 8.500 11.500 11 M14 3.500 Q17 8.500 14 13.500 M16.500 1 Q21.500 8.500 16.500 16" /></svg>
      </Cell>
      <Cell w="w-[36px]">
        <svg viewBox="0 0 20 17" className="h-[17px] w-5" fill="none" stroke="#fff" strokeWidth="1.400"><path d="M6 3.500 H15 Q17 3.500 17 5.500 V13 Q17 15.300 15 15.300 H4 Q2 15.300 2 13 V11" /><path d="M8 6 H15 V13 H4.500 L8 9Z" fill="#fff" stroke="none" /><path d="M18 7.500 H20 V11.500 H18Z M3 0 L0.500 6.500 H3 L2 11 L6.500 4.500 H4 L5 0Z" fill="#fff" stroke="none" /></svg>
      </Cell>
      <div className="-mt-0.5 w-[89px] text-right text-[15px] leading-[20px] tracking-[-0.200px]"><div>20:25</div><div>22-10-2023</div></div>
      <Cell w="w-[38px]">
        <svg viewBox="0 0 16 19" className="h-[19px] w-4" fill="none" stroke="#fff" strokeWidth="1.400"><path d="M2.300 7 A5.700 6 0 0 1 13.700 7 V11 L15.300 15 H0.700 L2.300 11Z" strokeLinejoin="round" /><path d="M5.500 15.500 Q6 18 8 18 Q10 18 10.500 15.500" /></svg>
      </Cell>
    </div>
  </div>
);

/* ---------- page ---------- */

export default function App() {
  return (
    <div className="h-[1080px] w-[1920px] overflow-hidden bg-white">
      <SharedDefs />
      <TabStrip />
      <Toolbar />
      <div className="flex h-[904px]">
        <div className="w-[1899px]"><ChatPage /></div>
        <div className="flex w-[21px] flex-col items-center bg-[#f1f1f1]">
          <div className="flex h-[22px] items-center"><PickerArrow color="#a3a3a3" /></div>
          <div className="h-[821px] w-[18px] bg-[#c1c1c1]" />
          <div className="mt-auto flex h-[23px] items-center"><PickerArrow down /></div>
        </div>
      </div>
      <div className="flex h-[21px] items-center bg-[#f1f1f1]">
        <div className="flex w-[22px] justify-center"><div className="-rotate-90"><PickerArrow color="#a3a3a3" /></div></div>
        <div className="h-[18px] w-[1823px] bg-[#c1c1c1]" />
        <div className="ml-auto flex w-[22px] justify-center"><div className="rotate-90"><PickerArrow /></div></div>
        <div className="h-[21px] w-[21px] bg-[#dcdcdc]" />
      </div>
      <Taskbar />
    </div>
  );
}
